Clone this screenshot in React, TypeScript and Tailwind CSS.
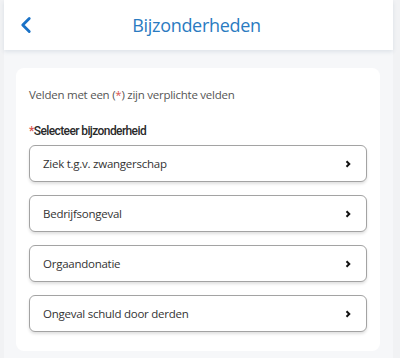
import { ChevronLeft } from 'lucide-react';

const options = [
    'Ziek t.g.v. zwangerschap',
    'Bedrijfsongeval',
    'Orgaandonatie',
    'Ongeval schuld door derden',
];

function OptionButton({ label }: { label: string }) {
    return (
        <button
            type="button"
            className="flex items-center justify-between h-[37px] w-full pl-[13px] pr-[15px] bg-white border border-[#a3a3a3] rounded-[6px] shadow-[0_2px_3px_rgba(0,0,0,0.12)] text-[11.5px] tracking-[-0.25px] text-[#333] text-left"
        >
            <span>{label}</span>
            <svg width="6" height="8" viewBox="0 0 6 8" className="text-[#111]">
                <path d="M1.5 1.2 L4.3 4 L1.5 6.8" fill="none" stroke="currentColor" strokeWidth="2" />
            </svg>
        </button>
    );
}

export default function App() {
    return (
        <div className="w-[400px] h-[358px] bg-[#f1f2f4] overflow-hidden font-['Open_Sans',sans-serif]">
            <div className="ml-1 w-[389px] h-full bg-[#f6f7f9]">
                <header className="relative flex items-center justify-center h-[50px] bg-white shadow-[0_2px_4px_rgba(60,90,120,0.12)]">
                    <ChevronLeft className="absolute left-[9px] top-[12px] text-[#1a72c7]" size={26} strokeWidth={2.6} />
                    <h1 className="text-[18px] tracking-[-0.3px] text-[#2a7bc1] -ml-1">Bijzonderheden</h1>
                </header>
                <div className="pt-[18px] pl-3 pr-[13px]">
                    <div className="bg-white rounded-[8px] px-[13px] pt-[19px] pb-[19px]">
                        <p className="text-[11.5px] tracking-[-0.25px] leading-4 text-[#555]">
                            Velden met een (<span className="text-[#d9534f]">*</span>) zijn verplichte velden
                        </p>
                        <p className="mt-5 font-['Roboto',sans-serif] text-[12px] tracking-[-0.6px] leading-4 font-medium text-[#2a2a2a]">
                            <span className="text-[#d9534f]">*</span>Selecteer bijzonderheid
                        </p>
                        <div className="mt-[6px] flex flex-col gap-[13px]">
                            {options.map((o) => (
                                <OptionButton key={o} label={o} />
                            ))}
                        </div>
                    </div>
                </div>
            </div>
        </div>
    );
}
